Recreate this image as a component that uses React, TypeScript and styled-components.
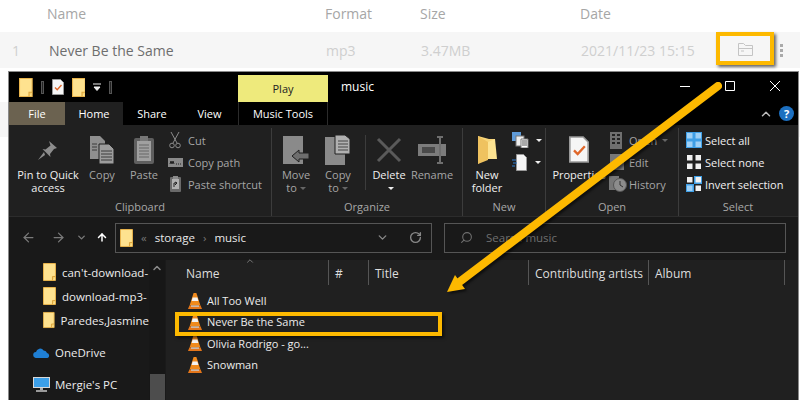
import React from 'react';
import styled, { createGlobalStyle } from 'styled-components';
import { ChevronDown, ChevronUp, RotateCw, Search, ArrowLeft, ArrowRight, ArrowUp } from 'lucide-react';

const GlobalStyle = createGlobalStyle`
  html, body { margin: 0; padding: 0; background: #fff; }
  body { width: 800px; height: 400px; overflow: hidden; font-family: "Open Sans", "Liberation Sans", sans-serif; }
  * { box-sizing: border-box; }
`;

const Page = styled.div`
  position: relative;
  width: 800px;
  height: 400px;
  overflow: hidden;
`;

const TrackGrid = styled.div`
  display: grid;
  grid-template-columns: 47px 278px 95px 160px 1fr;
  align-items: center;
`;

const HeadRow = styled(TrackGrid)`
  height: 32px;
  padding-bottom: 6px;
  color: #a6a6a6;
  font-size: 14px;
`;

const TrackRow = styled(TrackGrid)`
  position: relative;
  height: 36px;
  background: #f6f6f6;
  font-size: 14px;
  color: #cfcfcf;
  padding-left: 12px;
  grid-template-columns: 37px 277px 95px 160px 1fr;
`;

const TrackTitle = styled.span`
  color: #6e6e6e;
`;

const FolderSlot = styled.div`
  position: absolute;
  left: 738px;
  top: 11px;
  color: #c4c4c4;
  display: flex;
`;

const Dots = styled.div`
  position: absolute;
  left: 780px;
  top: 12px;
  display: flex;
  flex-direction: column;
  gap: 2px;
  & i { width: 3px; height: 3px; background: #aaa; display: block; }
`;

const Desk = styled.div`
  padding: 3px 0 0 8px;
  height: 332px;
  background: linear-gradient(#fff 34px, #f6f6f6 34px, #f6f6f6 69px, #fff 69px);
`;

const Window = styled.div`
  width: 791px;
  height: 329px;
  border: 1px solid #8a8a8a;
  border-bottom: 0;
  background: #202020;
  color: #fff;
  font-size: 11px;
  display: flex;
  flex-direction: column;
`;

const TitleBar = styled.div`
  height: 30px;
  background: #000;
  display: flex;
  flex: none;
`;

const QuickAccess = styled.div`
  width: 229px;
  display: flex;
  align-items: center;
  padding: 0 0 0 10px;
  gap: 8px;
`;

const QatSep = styled.span`
  width: 3px;
  height: 13px;
  border: 1px solid #555;
  background: #222;
`;

const PlayTab = styled.div`
  width: 90px;
  margin-top: 3px;
  background: #eeea7c;
  color: #222;
  font-size: 11px;
  display: flex;
  align-items: center;
  justify-content: center;
`;

const WindowTitle = styled.div`
  margin-left: 13px;
  font-size: 12px;
  line-height: 30px;
`;

const Controls = styled.div`
  margin-left: auto;
  display: flex;
  align-items: center;
  height: 28px;
  padding-right: 18px;
  gap: 35px;
`;

const TabBar = styled.div`
  height: 23px;
  flex: none;
  background: #000;
  display: flex;
  align-items: stretch;
  position: relative;
`;

const Tab = styled.div<{ $w: number; $kind?: 'file' | 'active' | 'tools' }>`
  width: ${(p) => p.$w}px;
  display: flex;
  align-items: center;
  justify-content: center;
  font-size: 11px;
  background: ${(p) => (p.$kind === 'file' ? '#6b6250' : p.$kind === 'active' ? '#202020' : 'transparent')};
  ${(p) => p.$kind === 'tools' && 'border-left: 1px solid #2b2b2b; border-right: 1px solid #2b2b2b;'}
`;

const TabTools = styled.div`
  margin-left: auto;
  display: flex;
  align-items: center;
  gap: 6px;
  padding-right: 4px;
  color: #bbb;
`;

const HelpDot = styled.span`
  width: 15px;
  height: 15px;
  border-radius: 50%;
  background: #1c6fc0;
  color: #fff;
  font-size: 11px;
  font-weight: 700;
  display: flex;
  align-items: center;
  justify-content: center;
`;

const Ribbon = styled.div`
  height: 92px;
  flex: none;
  display: flex;
  border-bottom: 1px solid #2c2c2c;
`;

const Group = styled.div<{ $w?: number }>`
  width: ${(p) => (p.$w ? `${p.$w}px` : 'auto')};
  flex: ${(p) => (p.$w ? 'none' : '1')};
  display: flex;
  flex-direction: column;
  margin-top: 3px;
  border-right: 1px solid ${(p) => (p.$w ? '#3c3c3c' : 'transparent')};
`;

const GroupBody = styled.div<{ $pad?: number }>`
  flex: 1;
  display: flex;
  padding-left: ${(p) => p.$pad ?? 0}px;
`;

const GroupLabel = styled.div`
  height: 17px;
  text-align: center;
  color: #a8a8a8;
  font-size: 11px;
  line-height: 15px;
`;

const BigBtn = styled.div<{ $w: number; $dim?: boolean; $after?: number }>`
  width: ${(p) => p.$w}px;
  margin-left: ${(p) => p.$after ?? 0}px;
  flex: none;
  display: flex;
  flex-direction: column;
  align-items: center;
  color: ${(p) => (p.$dim ? '#a6a6a6' : '#f0f0f0')};
  line-height: 13px;
  text-align: center;
  white-space: nowrap;
  padding-top: 5px;
  & svg { flex: none; margin-bottom: 2px; }
`;

const BigIcon = styled.div`
  height: 35px;
  display: flex;
  align-items: center;
  justify-content: center;
`;

const Caret = styled.span<{ $white?: boolean }>`
  display: inline-block;
  width: 0;
  height: 0;
  margin-left: 3px;
  vertical-align: 2px;
  border: 3px solid transparent;
  border-bottom: 0;
  border-top: 3px solid ${(p) => (p.$white ? '#eee' : '#666')};
`;

const Stack = styled.div<{ $left?: number }>`
  margin-left: ${(p) => p.$left ?? 0}px;
  display: flex;
  flex-direction: column;
  padding-top: 1px;
`;

const SmallCmd = styled.div<{ $dim?: boolean; $gap?: number }>`
  height: 22px;
  display: flex;
  align-items: center;
  gap: ${(p) => p.$gap ?? 4}px;
  white-space: nowrap;
  color: ${(p) => (p.$dim ? '#a6a6a6' : '#f0f0f0')};
`;

const Slot = styled.span<{ $w: number }>`
  width: ${(p) => p.$w}px;
  display: flex;
  justify-content: center;
  flex: none;
`;

const VRule = styled.span`
  width: 1px;
  height: 55px;
  margin: 7px 2px 0 5px;
  background: #3c3c3c;
  flex: none;
`;

const AddressRow = styled.div`
  height: 43px;
  flex: none;
  background: #191919;
  display: flex;
  align-items: center;
  padding: 0 0 2px 11px;
  color: #777;
`;

const NavSlot = styled.span<{ $w: number; $on?: boolean }>`
  width: ${(p) => p.$w}px;
  display: flex;
  justify-content: center;
  color: ${(p) => (p.$on ? '#fff' : '#7a7a7a')};
`;

const AddressBox = styled.div`
  width: 317px;
  height: 30px;
  margin-left: 7px;
  border: 1px solid #555;
  display: flex;
  align-items: center;
  padding-left: 4px;
  font-size: 11.5px;
  color: #e8e8e8;
  gap: 8px;
`;

const Crumb = styled.span<{ $dim?: boolean }>`
  color: ${(p) => (p.$dim ? '#777' : '#e8e8e8')};
`;

const AddressEnd = styled.div`
  margin-left: auto;
  display: flex;
  align-items: center;
  gap: 20px;
  padding-right: 9px;
  color: #888;
`;

const SearchBox = styled.div`
  width: 342px;
  height: 30px;
  margin-left: 12px;
  border: 1px solid #555;
  display: flex;
  align-items: center;
  padding-left: 15px;
  gap: 13px;
  font-size: 11.5px;
  color: #6f6f6f;
`;

const Panes = styled.div`
  flex: 1;
  min-height: 0;
  display: flex;
`;

const NavPane = styled.div`
  width: 156px;
  flex: none;
  background: #191919;
  display: flex;
`;

const NavList = styled.div`
  width: 140px;
  flex: none;
  overflow: hidden;
`;

const NavItem = styled.div<{ $indent: number; $h: number; $gap: number }>`
  height: ${(p) => p.$h}px;
  padding-left: ${(p) => p.$indent}px;
  display: flex;
  align-items: center;
  gap: ${(p) => p.$gap}px;
  white-space: nowrap;
  font-size: 11.5px;
  color: #ececec;
`;

const ScrollTrack = styled.div`
  width: 16px;
  flex: none;
  display: flex;
  flex-direction: column;
  color: #8a8a8a;
  background: #171717;
  align-items: center;
  padding-top: 2px;
`;

const ScrollThumb = styled.div`
  margin-top: auto;
  width: 15px;
  height: 26px;
  background: #4d4d4d;
`;

const Content = styled.div`
  flex: 1;
  min-width: 0;
  border-left: 1px solid #1a1a1a;
`;

const ColumnHead = styled.div`
  position: relative;
  height: 25px;
  display: flex;
  font-size: 12px;
  color: #dedede;
  margin-bottom: 5px;
`;

const Col = styled.div<{ $w: number; $pad?: number }>`
  width: ${(p) => p.$w}px;
  flex: none;
  padding-left: ${(p) => p.$pad ?? 6}px;
  padding-top: 5px;
  border-right: 1px solid #555;
  white-space: nowrap;
`;

const SortMark = styled.span`
  position: absolute;
  left: 79px;
  top: -4px;
  color: #888;
  display: flex;
`;

const FileRow = styled.div`
  height: 21.3px;
  padding-left: 22px;
  display: flex;
  align-items: center;
  gap: 5px;
  font-size: 11px;
  color: #ececec;
`;

const Callout = styled.div`
  position: absolute;
  border: 4px solid #fdb900;
  box-shadow: 2px 2px 3px rgba(0, 0, 0, 0.6);
`;

const FolderCallout = styled(Callout)`
  left: 716px;
  top: 32px;
  width: 58px;
  height: 33px;
`;

const RowCallout = styled(Callout)`
  left: 175px;
  top: 312px;
  width: 267px;
  height: 24px;
`;

const ArrowLayer = styled.svg`
  position: absolute;
  left: 0;
  top: 0;
  filter: drop-shadow(2px 2px 1px rgba(0, 0, 0, 0.55));
  pointer-events: none;
`;

const QatFolder = ({ size = 19 }: { size?: number }) => (
  <svg width={size * 0.72} height={size} viewBox="0 0 13 18">
    <path d="M.5.5h12v17H.5z" fill="#fee28f" stroke="#e9b44c" />
    <path d="M9.5 17.5v-4h3" fill="#f6d06c" stroke="#dca53e" />
  </svg>
);

const DocCheck = ({ w = 12, h = 16 }: { w?: number; h?: number }) => (
  <svg width={w} height={h} viewBox="0 0 12 16">
    <path d="M.5.5h8l3 3v12H.5z" fill="#f6f6f6" stroke="#999" />
    <path d="M3 8.5l2.2 2.2L9.5 6" fill="none" stroke="#e0672a" strokeWidth="1.4" />
  </svg>
);

const Pin = () => (
  <svg width="22" height="22" viewBox="0 0 22 22">
    <path d="M12 2l8 7-3 1-4 5 .5 3-8-8 3 .5 5-4z" fill="#8d8d8d" />
    <path d="M7 13L1 21l7-5z" fill="#8d8d8d" />
  </svg>
);

const CopyIcon = ({ w = 24, h = 28 }: { w?: number; h?: number }) => (
  <svg width={w} height={h} viewBox="0 0 24 28">
    <path d="M0 0h10l5 5v18H0z" fill="#8f8f8f" />
    <path d="M9 8h10l5 5v15H9z" fill="#9d9d9d" stroke="#202020" />
    <path d="M11 15h11M11 18h11M11 21h11M11 24h11M2 8h5M2 11h5M2 14h5" stroke="#3a3a3a" />
  </svg>
);

const PasteIcon = () => (
  <svg width="20" height="28" viewBox="0 0 20 28">
    <rect y="2" width="20" height="26" rx="2" fill="#5f5f5f" />
    <rect x="3" y="5" width="14" height="20" fill="#a0a0a0" />
    <rect x="6" y="0" width="8" height="5" fill="#777" />
    <path d="M5 9h10M5 12h10M5 15h10M5 18h10M5 21h10" stroke="#666" />
  </svg>
);

const Scissors = () => (
  <svg width="12" height="17" viewBox="0 0 12 17" fill="none" stroke="#8c8c8c">
    <path d="M2 0l6 11M10 0L4 11" />
    <circle cx="3" cy="13.5" r="2.3" />
    <circle cx="9" cy="13.5" r="2.3" />
  </svg>
);

const PathIcon = () => (
  <svg width="15" height="9" viewBox="0 0 15 9">
    <rect width="15" height="9" fill="#8a8a8a" />
    <path d="M2 6l1-3 1 3 1-3 1 3M8 6h1M10 6h1M12 6h1" stroke="#222" fill="none" />
  </svg>
);

const ShortcutIcon = () => (
  <svg width="11" height="16" viewBox="0 0 11 16">
    <rect y="1" width="11" height="15" rx="1" fill="#6a6a6a" />
    <rect x="2" y="3" width="7" height="10" fill="#b0b0b0" />
    <rect x="3" width="5" height="3" fill="#8a8a8a" />
    <path d="M4 11V7h3M5 6l2 1-2 2" stroke="#222" fill="none" />
  </svg>
);

const MoveIcon = () => (
  <svg width="26" height="28" viewBox="0 0 26 28">
    <path d="M0 0h20v28H0z" fill="#8a8a8a" />
    <path d="M9 20l7-6v3h10v6H16v3z" fill="#6e6e6e" stroke="#202020" />
  </svg>
);

const CopyToIcon = () => (
  <svg width="26" height="30" viewBox="0 0 26 30">
    <path d="M0 2h20v28H0z" fill="#8a8a8a" />
    <path d="M10 0h10l5 4v15H10z" fill="#b0b0b0" stroke="#202020" />
    <path d="M13 6h10M13 9h10M13 12h10M13 15h10" stroke="#444" />
  </svg>
);

const BigX = () => (
  <svg width="26" height="26" viewBox="0 0 26 26">
    <path d="M2 2l22 22M24 2L2 24" stroke="#5a5a5a" strokeWidth="3" />
  </svg>
);

const RenameIcon = () => (
  <svg width="28" height="28" viewBox="0 0 28 28">
    <rect y="8" width="28" height="12" fill="#7c7c7c" />
    <rect x="4" y="11" width="13" height="6" fill="#4a4a4a" />
    <path d="M19 1h6M22 1v26M19 27h6" stroke="#6f6f6f" strokeWidth="2" fill="none" />
  </svg>
);

const NewFolderIcon = () => (
  <svg width="19" height="28" viewBox="0 0 19 28">
    <path d="M0 0l11 3h6v20H4l-4 5z" fill="#f8d67a" />
    <path d="M0 0l10 6v18L0 28z" fill="#efc25f" />
    <path d="M10 6l7-3 2 20H10z" fill="#fde391" />
  </svg>
);

const NewItemIcon = () => (
  <svg width="17" height="16" viewBox="0 0 17 16">
    <rect width="9" height="9" fill="#5f9bd8" />
    <rect x="4" y="4" width="8" height="10" fill="#eee" stroke="#777" />
    <path d="M9 7h7v9H9z" fill="#fff" stroke="#777" />
    <path d="M10 9h5M10 11h5M10 13h5" stroke="#555" />
  </svg>
);

const EasyAccessIcon = () => (
  <svg width="16" height="17" viewBox="0 0 16 17">
    <path d="M4.5.5h7l3 3v13h-10z" fill="#f5f5f5" stroke="#999" />
    <path d="M0 6h4M1 9h4M0 12h3" stroke="#2f7fd1" strokeWidth="1.2" />
  </svg>
);

const OpenIcon = () => (
  <svg width="16" height="17" viewBox="0 0 16 17">
    <rect width="12" height="17" fill="#6f6f6f" />
    <path d="M2 3h3M7 3h3M2 7h3M7 7h3M2 11h3M7 11h3" stroke="#222" strokeWidth="2" />
  </svg>
);

const EditIcon = () => (
  <svg width="16" height="16" viewBox="0 0 16 16">
    <rect width="14" height="16" fill="#777" />
    <path d="M4 13l8-9 2 2-8 9z" fill="#aaa" />
  </svg>
);

const HistoryIcon = () => (
  <svg width="18" height="16" viewBox="0 0 18 16">
    <rect width="10" height="14" fill="#777" />
    <circle cx="11" cy="9" r="6.5" fill="#8c8c8c" stroke="#555" />
    <path d="M11 5v4l3 2" stroke="#333" fill="none" />
  </svg>
);

const SelectGrid = ({ mode }: { mode: 'all' | 'none' | 'invert' }) => {
  const cells: [number, number, boolean][] = [
    [0, 0, mode === 'all'],
    [8.5, 0, mode === 'all'],
    [0, 8.5, mode !== 'none'],
    [8.5, 8.5, mode === 'all'],
  ];
  const frame = mode === 'invert';
  return (
    <svg width="16" height="16" viewBox="0 0 16 16">
      {mode === 'all' && <rect width="16" height="16" fill="#3f9fe6" />}
      {frame && <rect y="8" width="8" height="8" fill="#3f9fe6" />}
      {frame && <rect x="8" width="8" height="8" fill="#3f9fe6" />}
      {cells.map(([x, y, on], i) => (
        <rect key={i} x={x + 1} y={y + 1} width="5.5" height="5.5" fill={on ? '#9fd0f5' : '#f2f2f2'} />
      ))}
    </svg>
  );
};

const VlcCone = () => (
  <svg width="14" height="16" viewBox="0 0 14 16">
    <path d="M5.6 0h2.8l4 12.5H1.6z" fill="#f08a1c" />
    <path d="M4.6 4.5h4.8l1 3.6H3.6z" fill="#f3f3f3" />
    <path d="M0 16l1.4-3.6h11.2L14 16z" fill="#e4761a" />
    <path d="M3 12.4h8v1.4H3z" fill="#c9c9c9" />
  </svg>
);

const Cloud = () => (
  <svg width="17" height="11" viewBox="0 0 17 11">
    <path d="M3.4 11a3 3 0 0 1-.4-6 4.2 4.2 0 0 1 7.6-1.6A3.4 3.4 0 0 1 14 6a2.6 2.6 0 0 1 .4 5z" fill="#1f7fd4" />
  </svg>
);

const Monitor = () => (
  <svg width="17" height="15" viewBox="0 0 17 15">
    <rect width="17" height="11" fill="#d8d8d8" />
    <rect x="1" y="1" width="15" height="9" fill="#3c9fe8" />
    <rect x="7" y="11" width="3" height="2" fill="#aaa" />
    <rect x="3" y="13" width="11" height="2" fill="#999" />
  </svg>
);

const FolderOutline = () => (
  <svg width="15" height="13" viewBox="0 0 15 13" fill="none" stroke="currentColor">
    <path d="M.5 12.5V.5h5l2 2h7v10zM.5 5.5h14M3 8h3" />
  </svg>
);

const App = () => (
  <Page>
    <GlobalStyle />
    <HeadRow>
      <span />
      <span>Name</span>
      <span>Format</span>
      <span>Size</span>
      <span>Date</span>
    </HeadRow>
    <TrackRow>
      <span>1</span>
      <TrackTitle>Never Be the Same</TrackTitle>
      <span>mp3</span>
      <span>3.47MB</span>
      <span>2021/11/23 15:15</span>
      <FolderSlot>
        <FolderOutline />
      </FolderSlot>
      <Dots>
        <i />
        <i />
        <i />
      </Dots>
    </TrackRow>
    <Desk>
      <Window>
        <TitleBar>
          <QuickAccess>
            <QatFolder />
            <QatSep />
            <DocCheck />
            <QatFolder />
            <svg width="8" height="8" viewBox="0 0 8 8">
              <path d="M0 1h8M1 4h6l-3 3.5z" stroke="#eee" fill="#eee" />
            </svg>
            <QatSep />
          </QuickAccess>
          <PlayTab>Play</PlayTab>
          <WindowTitle>music</WindowTitle>
          <Controls>
            <svg width="10" height="10" viewBox="0 0 10 10">
              <path d="M0 5.5h10" stroke="#fff" />
            </svg>
            <svg width="10" height="10" viewBox="0 0 10 10">
              <path d="M.5.5h9v9h-9z" stroke="#fff" fill="none" />
            </svg>
            <svg width="10" height="10" viewBox="0 0 10 10">
              <path d="M0 0l10 10M10 0L0 10" stroke="#fff" />
            </svg>
          </Controls>
        </TitleBar>
        <TabBar>
          <Tab $w={56} $kind="file">File</Tab>
          <Tab $w={58} $kind="active">Home</Tab>
          <Tab $w={58}>Share</Tab>
          <Tab $w={57}>View</Tab>
          <Tab $w={90} $kind="tools">Music Tools</Tab>
          <TabTools>
            <ChevronUp size={14} strokeWidth={2.5} />
            <HelpDot>?</HelpDot>
          </TabTools>
        </TabBar>
        <Ribbon>
          <Group $w={263}>
            <GroupBody $pad={8}>
              <BigBtn $w={62}>
                <BigIcon><Pin /></BigIcon>
                <span>Pin to Quick<br />access</span>
              </BigBtn>
              <BigBtn $w={42} $dim $after={2}>
                <BigIcon><CopyIcon /></BigIcon>
                <span>Copy</span>
              </BigBtn>
              <BigBtn $w={42} $dim>
                <BigIcon><PasteIcon /></BigIcon>
                <span>Paste</span>
              </BigBtn>
              <Stack $left={2}>
                <SmallCmd $dim $gap={5}><Slot $w={16}><Scissors /></Slot>Cut</SmallCmd>
                <SmallCmd $dim $gap={5}><Slot $w={16}><PathIcon /></Slot>Copy path</SmallCmd>
                <SmallCmd $dim $gap={5}><Slot $w={16}><ShortcutIcon /></Slot>Paste shortcut</SmallCmd>
              </Stack>
            </GroupBody>
            <GroupLabel>Clipboard</GroupLabel>
          </Group>
          <Group $w={191}>
            <GroupBody $pad={4}>
              <BigBtn $w={40} $dim>
                <BigIcon><MoveIcon /></BigIcon>
                <span>Move<br />to<Caret /></span>
              </BigBtn>
              <BigBtn $w={44} $dim>
                <BigIcon><CopyToIcon /></BigIcon>
                <span>Copy<br />to<Caret /></span>
              </BigBtn>
              <VRule />
              <BigBtn $w={42}>
                <BigIcon><BigX /></BigIcon>
                <span>Delete<br /><Caret $white /></span>
              </BigBtn>
              <BigBtn $w={44} $dim>
                <BigIcon><RenameIcon /></BigIcon>
                <span>Rename</span>
              </BigBtn>
            </GroupBody>
            <GroupLabel>Organize</GroupLabel>
          </Group>
          <Group $w={83}>
            <GroupBody $pad={2}>
              <BigBtn $w={44}>
                <BigIcon><NewFolderIcon /></BigIcon>
                <span>New<br />folder</span>
              </BigBtn>
              <Stack $left={3}>
                <SmallCmd><NewItemIcon /><Caret $white /></SmallCmd>
                <SmallCmd><EasyAccessIcon /><Caret $white /></SmallCmd>
              </Stack>
            </GroupBody>
            <GroupLabel>New</GroupLabel>
          </Group>
          <Group $w={133}>
            <GroupBody $pad={3}>
              <BigBtn $w={60}>
                <BigIcon><DocCheck w={20} h={27} /></BigIcon>
                <span>Properties<br /><Caret $white /></span>
              </BigBtn>
              <Stack>
                <SmallCmd $dim $gap={2}><Slot $w={18}><OpenIcon /></Slot>Open<Caret /></SmallCmd>
                <SmallCmd $dim $gap={2}><Slot $w={18}><EditIcon /></Slot>Edit</SmallCmd>
                <SmallCmd $dim $gap={2}><Slot $w={18}><HistoryIcon /></Slot>History</SmallCmd>
              </Stack>
            </GroupBody>
            <GroupLabel>Open</GroupLabel>
          </Group>
          <Group>
            <GroupBody $pad={7}>
              <Stack>
                <SmallCmd $gap={3}><SelectGrid mode="all" />Select all</SmallCmd>
                <SmallCmd $gap={3}><SelectGrid mode="none" />Select none</SmallCmd>
                <SmallCmd $gap={3}><SelectGrid mode="invert" />Invert selection</SmallCmd>
              </Stack>
            </GroupBody>
            <GroupLabel>Select</GroupLabel>
          </Group>
        </Ribbon>
        <AddressRow>
          <NavSlot $w={16}><ArrowLeft size={15} /></NavSlot>
          <NavSlot $w={14} />
          <NavSlot $w={16}><ArrowRight size={15} /></NavSlot>
          <NavSlot $w={30}><ChevronDown size={11} strokeWidth={3} /></NavSlot>
          <NavSlot $w={12} $on><ArrowUp size={15} strokeWidth={3} /></NavSlot>
          <AddressBox>
            <QatFolder size={18} />
            <Crumb $dim>«</Crumb>
            <Crumb>storage</Crumb>
            <Crumb $dim>›</Crumb>
            <Crumb>music</Crumb>
            <AddressEnd>
              <ChevronDown size={13} strokeWidth={2.5} />
              <RotateCw size={13} strokeWidth={2.5} />
            </AddressEnd>
          </AddressBox>
          <SearchBox>
            <Search size={13} style={{ transform: 'scaleX(-1)' }} />
            Search music
          </SearchBox>
        </AddressRow>
        <Panes>
          <NavPane>
            <NavList>
              <NavItem $indent={34} $h={24} $gap={6}><QatFolder size={18} />can't-download-</NavItem>
              <NavItem $indent={34} $h={24} $gap={6}><QatFolder size={18} />download-mp3-</NavItem>
              <NavItem $indent={34} $h={24} $gap={6}><QatFolder size={18} />Paredes,Jasmine</NavItem>
              <NavItem $indent={24} $h={40} $gap={5}><Cloud />OneDrive</NavItem>
              <NavItem $indent={24} $h={24} $gap={5}><Monitor />Mergie's PC</NavItem>
            </NavList>
            <ScrollTrack>
              <ChevronUp size={12} strokeWidth={3} />
              <ScrollThumb />
            </ScrollTrack>
          </NavPane>
          <Content>
            <ColumnHead>
              <SortMark><ChevronUp size={10} /></SortMark>
              <Col $w={163} $pad={20}>Name</Col>
              <Col $w={40}>#</Col>
              <Col $w={160}>Title</Col>
              <Col $w={120}>Contributing artists</Col>
              <Col $w={136}>Album</Col>
            </ColumnHead>
            <FileRow><VlcCone />All Too Well</FileRow>
            <FileRow><VlcCone />Never Be the Same</FileRow>
            <FileRow><VlcCone />Olivia Rodrigo - go...</FileRow>
            <FileRow><VlcCone />Snowman</FileRow>
          </Content>
        </Panes>
      </Window>
    </Desk>
    <FolderCallout />
    <RowCallout />
    <ArrowLayer width="800" height="400" viewBox="0 0 800 400">
      <path d="M718 86L458 283" stroke="#fdb900" strokeWidth="8" strokeLinecap="round" fill="none" />
      <path d="M447 292l8-17 10 14z" fill="#fdb900" />
    </ArrowLayer>
  </Page>
);

export default App;
